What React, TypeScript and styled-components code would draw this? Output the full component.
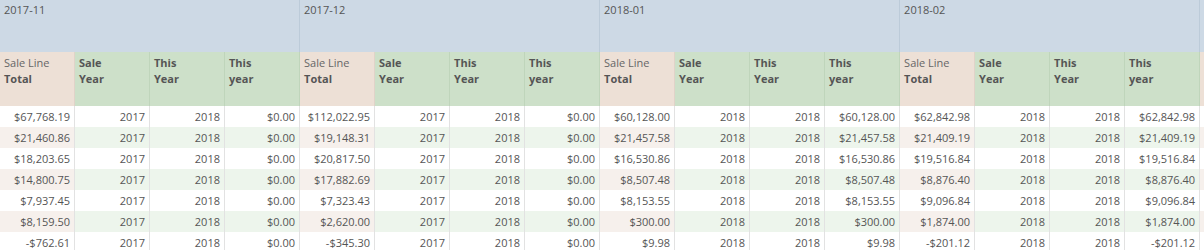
import React from 'react'
import styled, { createGlobalStyle } from 'styled-components'

const GlobalStyle = createGlobalStyle`
  html, body {
    margin: 0;
    padding: 0;
    background: #fff;
    overflow: hidden;
  }
  #root {
    width: 1204px;
    height: 250px;
    overflow: hidden;
  }
`

type Kind = 'total' | 'year'

const Table = styled.table`
  border-collapse: separate;
  border-spacing: 0;
  table-layout: fixed;
  width: 1275px;
  font-family: 'Open Sans', 'Liberation Sans', sans-serif;
  font-size: 11px;
  color: #555;
`

const GroupHead = styled.th`
  height: 52px;
  box-sizing: border-box;
  padding: 2px 4px 0;
  background: #cdd9e5;
  border-right: 1px solid #bccbd9;
  text-align: left;
  vertical-align: top;
  font-weight: 400;
  line-height: 16px;
  white-space: nowrap;
`

const ColHead = styled.th<{ $kind: Kind }>`
  height: 54px;
  box-sizing: border-box;
  padding: 3px 4px 0;
  background: ${p => (p.$kind === 'total' ? '#ede0d6' : '#cde0c9')};
  border-right: 1px solid ${p => (p.$kind === 'total' ? '#e0d3c9' : '#bfd5bb')};
  text-align: left;
  vertical-align: top;
  font-weight: 700;
  line-height: 16px;
  white-space: nowrap;
  overflow: hidden;
`

const Light = styled.span`
  font-weight: 400;
  color: #666;
`

const Row = styled.tr``

const Cell = styled.td<{ $kind: Kind; $striped: boolean }>`
  height: 21px;
  box-sizing: border-box;
  padding: 0 4px 0 4px;
  background: ${p =>
    !p.$striped ? '#fff' : p.$kind === 'total' ? '#f6f0ec' : '#edf5ec'};
  border-right: 1px solid #e2e2e2;
  text-align: right;
  line-height: 21px;
  white-space: nowrap;
  overflow: hidden;
`

type Group = {
  month: string
  rows: [string, string, string, string][]
}

const groups: Group[] = [
  {
    month: '2017-11',
    rows: [
      ['$67,768.19', '2017', '2018', '$0.00'],
      ['$21,460.86', '2017', '2018', '$0.00'],
      ['$18,203.65', '2017', '2018', '$0.00'],
      ['$14,800.75', '2017', '2018', '$0.00'],
      ['$7,937.45', '2017', '2018', '$0.00'],
      ['$8,159.50', '2017', '2018', '$0.00'],
      ['-$762.61', '2017', '2018', '$0.00'],
    ],
  },
  {
    month: '2017-12',
    rows: [
      ['$112,022.95', '2017', '2018', '$0.00'],
      ['$19,148.31', '2017', '2018', '$0.00'],
      ['$20,817.50', '2017', '2018', '$0.00'],
      ['$17,882.69', '2017', '2018', '$0.00'],
      ['$7,323.43', '2017', '2018', '$0.00'],
      ['$2,620.00', '2017', '2018', '$0.00'],
      ['-$345.30', '2017', '2018', '$0.00'],
    ],
  },
  {
    month: '2018-01',
    rows: [
      ['$60,128.00', '2018', '2018', '$60,128.00'],
      ['$21,457.58', '2018', '2018', '$21,457.58'],
      ['$16,530.86', '2018', '2018', '$16,530.86'],
      ['$8,507.48', '2018', '2018', '$8,507.48'],
      ['$8,153.55', '2018', '2018', '$8,153.55'],
      ['$300.00', '2018', '2018', '$300.00'],
      ['$9.98', '2018', '2018', '$9.98'],
    ],
  },
  {
    month: '2018-02',
    rows: [
      ['$62,842.98', '2018', '2018', '$62,842.98'],
      ['$21,409.19', '2018', '2018', '$21,409.19'],
      ['$19,516.84', '2018', '2018', '$19,516.84'],
      ['$8,876.40', '2018', '2018', '$8,876.40'],
      ['$9,096.84', '2018', '2018', '$9,096.84'],
      ['$1,874.00', '2018', '2018', '$1,874.00'],
      ['-$201.12', '2018', '2018', '-$201.12'],
    ],
  },
]

const kinds: Kind[] = ['total', 'year', 'year', 'year']

const App = () => {
  return (
    <>
      <GlobalStyle />
      <Table>
        <colgroup>
          {groups.map(g =>
            kinds.map((_, i) => <col key={g.month + i} width={75} />)
          )}
          <col width={75} />
        </colgroup>
        <thead>
          <tr>
            {groups.map(g => (
              <GroupHead key={g.month} colSpan={4}>
                {g.month}
              </GroupHead>
            ))}
            <GroupHead />
          </tr>
          <tr>
            {groups.map(g => (
              <React.Fragment key={g.month}>
                <ColHead $kind="total">
                  <Light>Sale Line</Light>
                  <br />
                  Total
                </ColHead>
                <ColHead $kind="year">
                  Sale
                  <br />
                  Year
                </ColHead>
                <ColHead $kind="year">
                  This
                  <br />
                  Year
                </ColHead>
                <ColHead $kind="year">
                  This
                  <br />
                  year
                </ColHead>
              </React.Fragment>
            ))}
            <ColHead $kind="total" />
          </tr>
        </thead>
        <tbody>
          {groups[0].rows.map((_, r) => {
            const striped = r % 2 === 1
            return (
              <Row key={r}>
                {groups.map(g =>
                  g.rows[r].map((v, c) => (
                    <Cell key={g.month + c} $kind={kinds[c]} $striped={striped}>
                      {v}
                    </Cell>
                  ))
                )}
                <Cell $kind="total" $striped={striped} />
              </Row>
            )
          })}
        </tbody>
      </Table>
    </>
  )
}

export default App
